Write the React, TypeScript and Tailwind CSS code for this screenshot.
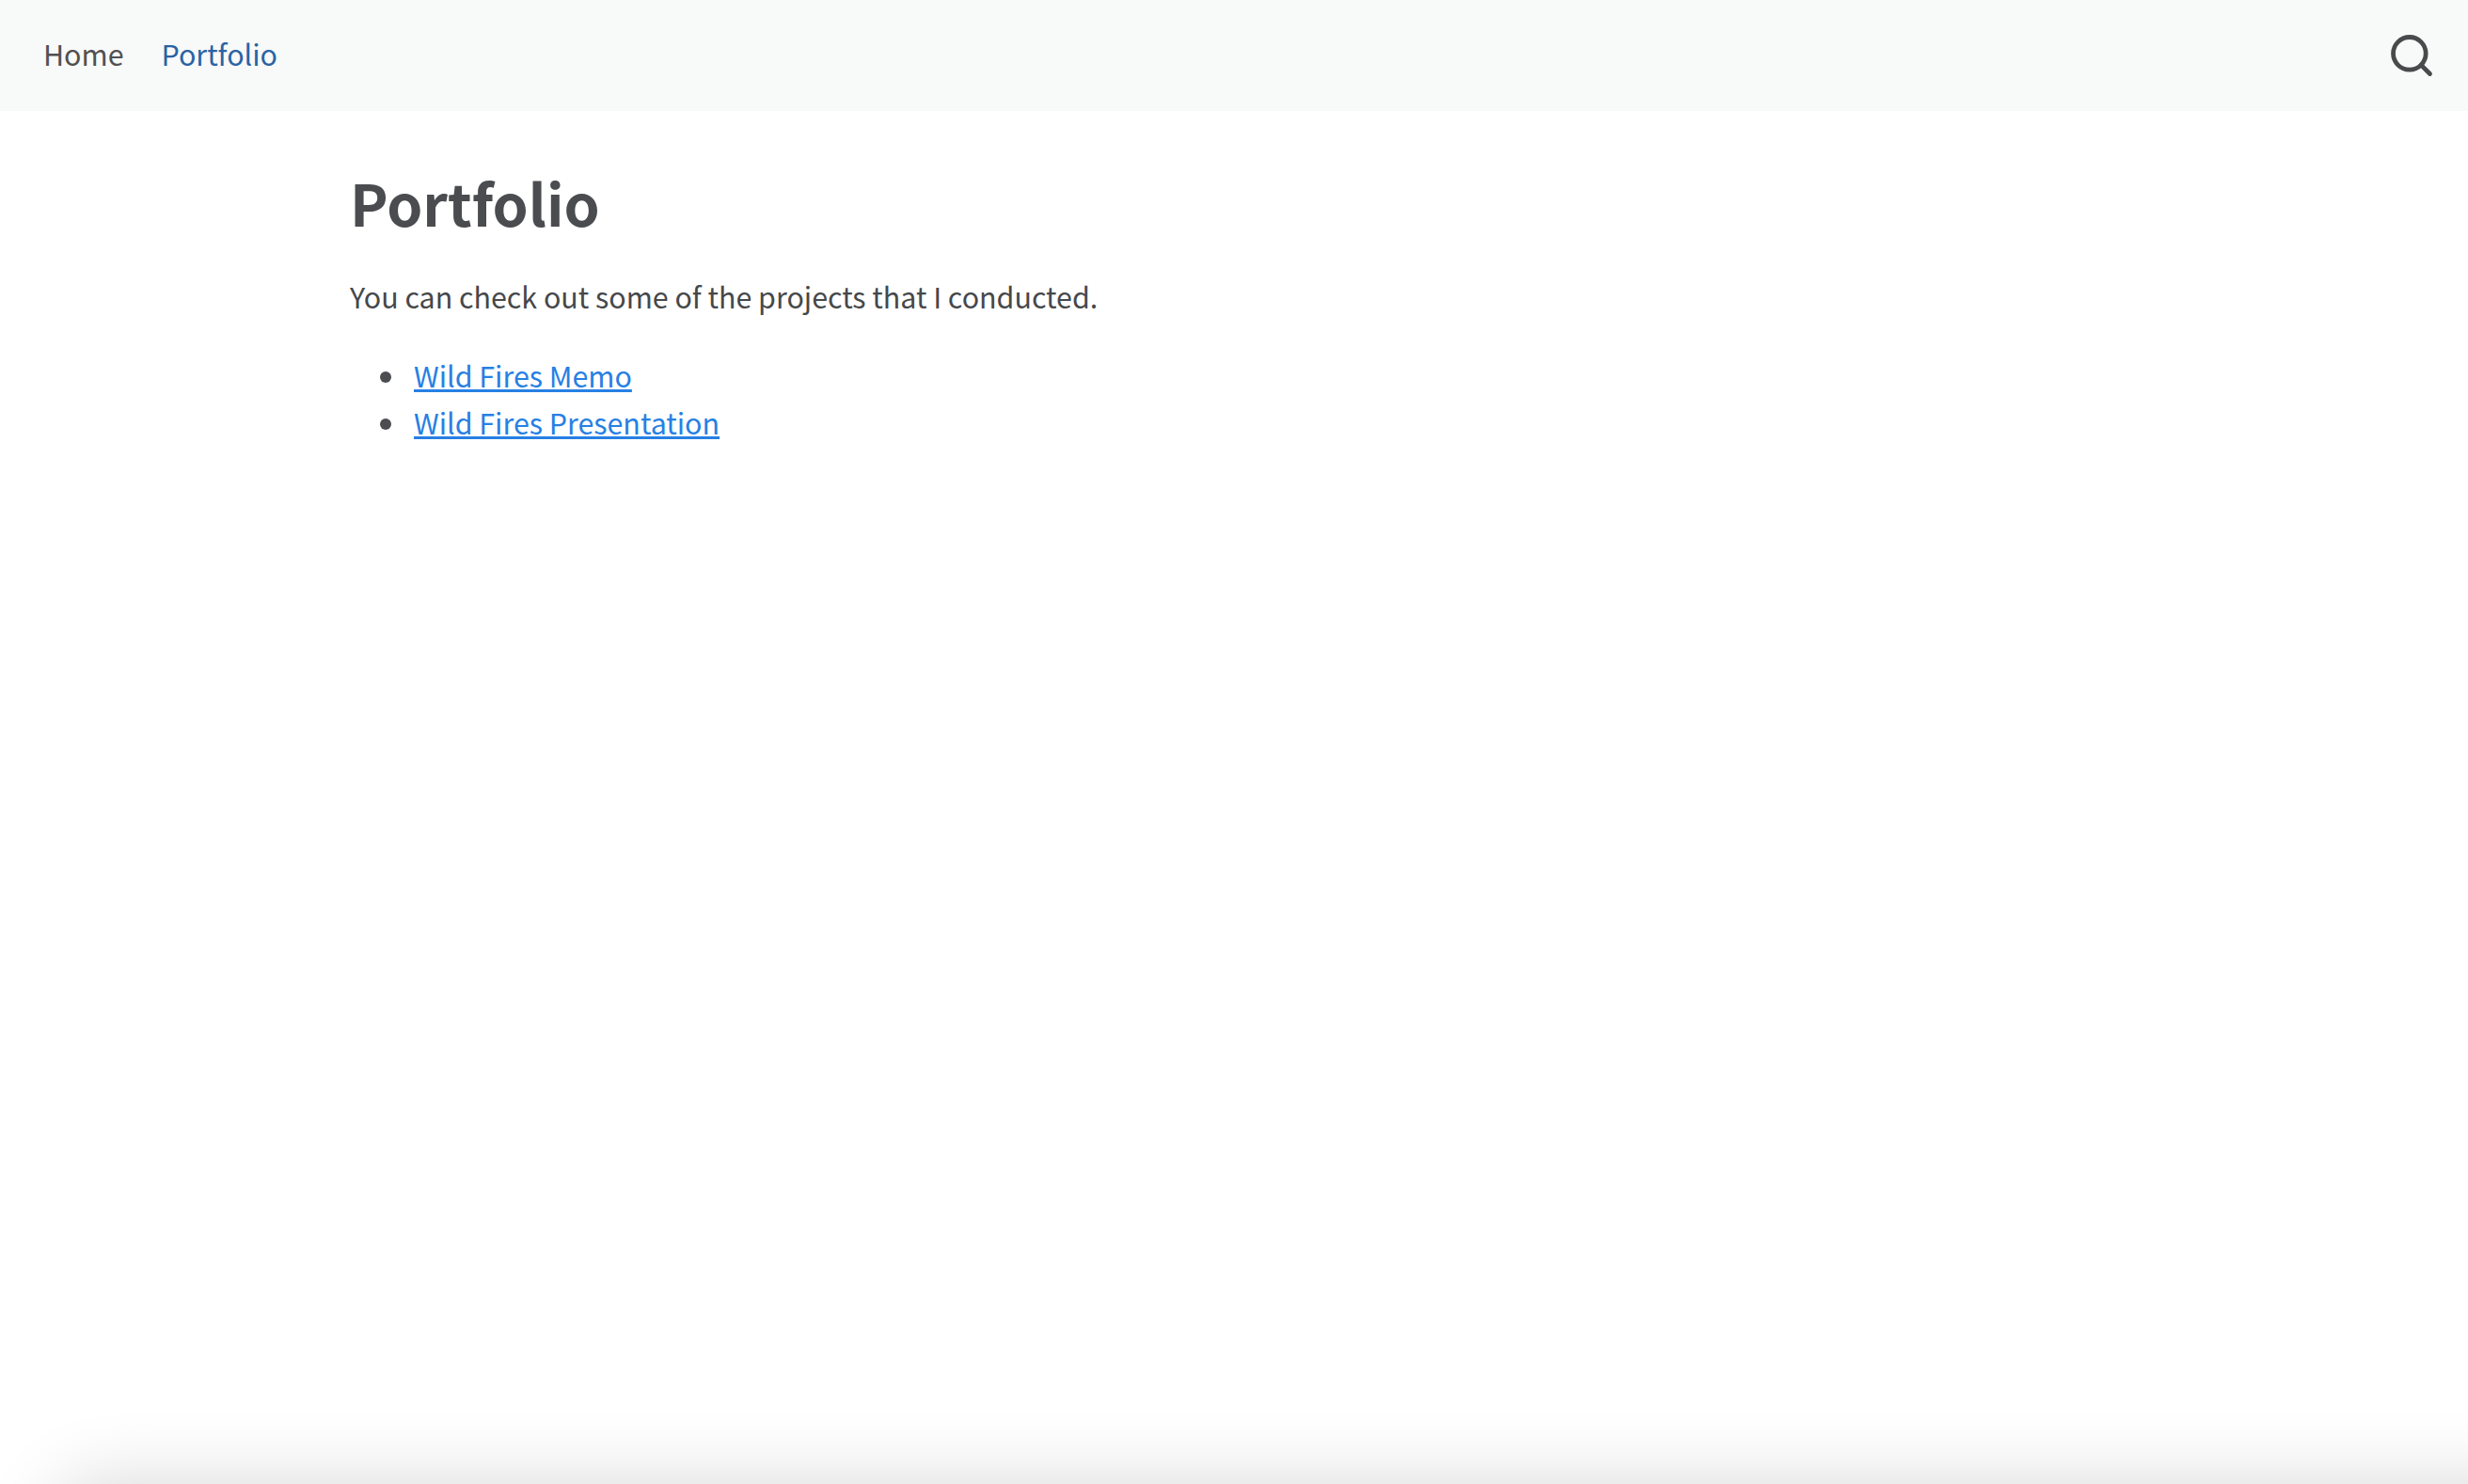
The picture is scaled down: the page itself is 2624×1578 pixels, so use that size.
import React from 'react';
import { Search } from 'lucide-react';

const links = ['Wild Fires Memo', 'Wild Fires Presentation'];

const App: React.FC = () => {
  return (
    <div className="relative h-[1578px] overflow-hidden bg-white font-['Noto_Sans_CJK_SC','Liberation_Sans',sans-serif] text-[#45484b]">
      {/* Navbar */}
      <nav className="flex h-[118px] items-center justify-between bg-[#f8f9f9] pl-[46px] pr-[34px]">
        <div className="flex items-center gap-[40px] pb-[4px] text-[30.4px] leading-[50px]">
          <a className="text-[#505050]">Home</a>
          <a className="text-[#2a63a4]">Portfolio</a>
        </div>
        <Search className="h-[52px] w-[52px] text-[#484a4c]" strokeWidth={2.2} />
      </nav>

      {/* Content */}
      <main className="pl-[372px] pt-[58px]">
        <h1 className="text-[61px] font-bold leading-[77px] text-[#4a4c4f]">Portfolio</h1>
        <p className="mt-[37px] text-[30.4px] leading-[50px]">You can check out some of the projects that I conducted.</p>
        <ul className="mt-[34px] pl-[32px] text-[30.4px] leading-[50px]">
          {links.map((link) => (
            <li key={link} className="flex items-center gap-[24px]">
              <span className="mt-[3px] h-[12px] w-[12px] rounded-full bg-[#4b4d50]" />
              <a className="text-[#2780e3] underline">{link}</a>
            </li>
          ))}
        </ul>
      </main>

      {/* Shadow of the panel below the fold */}
      <div className="absolute left-[60px] right-[-200px] top-[1578px] h-[200px] rounded-[40px] shadow-[0_0_80px_rgba(0,0,0,0.16)]" />
    </div>
  );
};

export default App;
